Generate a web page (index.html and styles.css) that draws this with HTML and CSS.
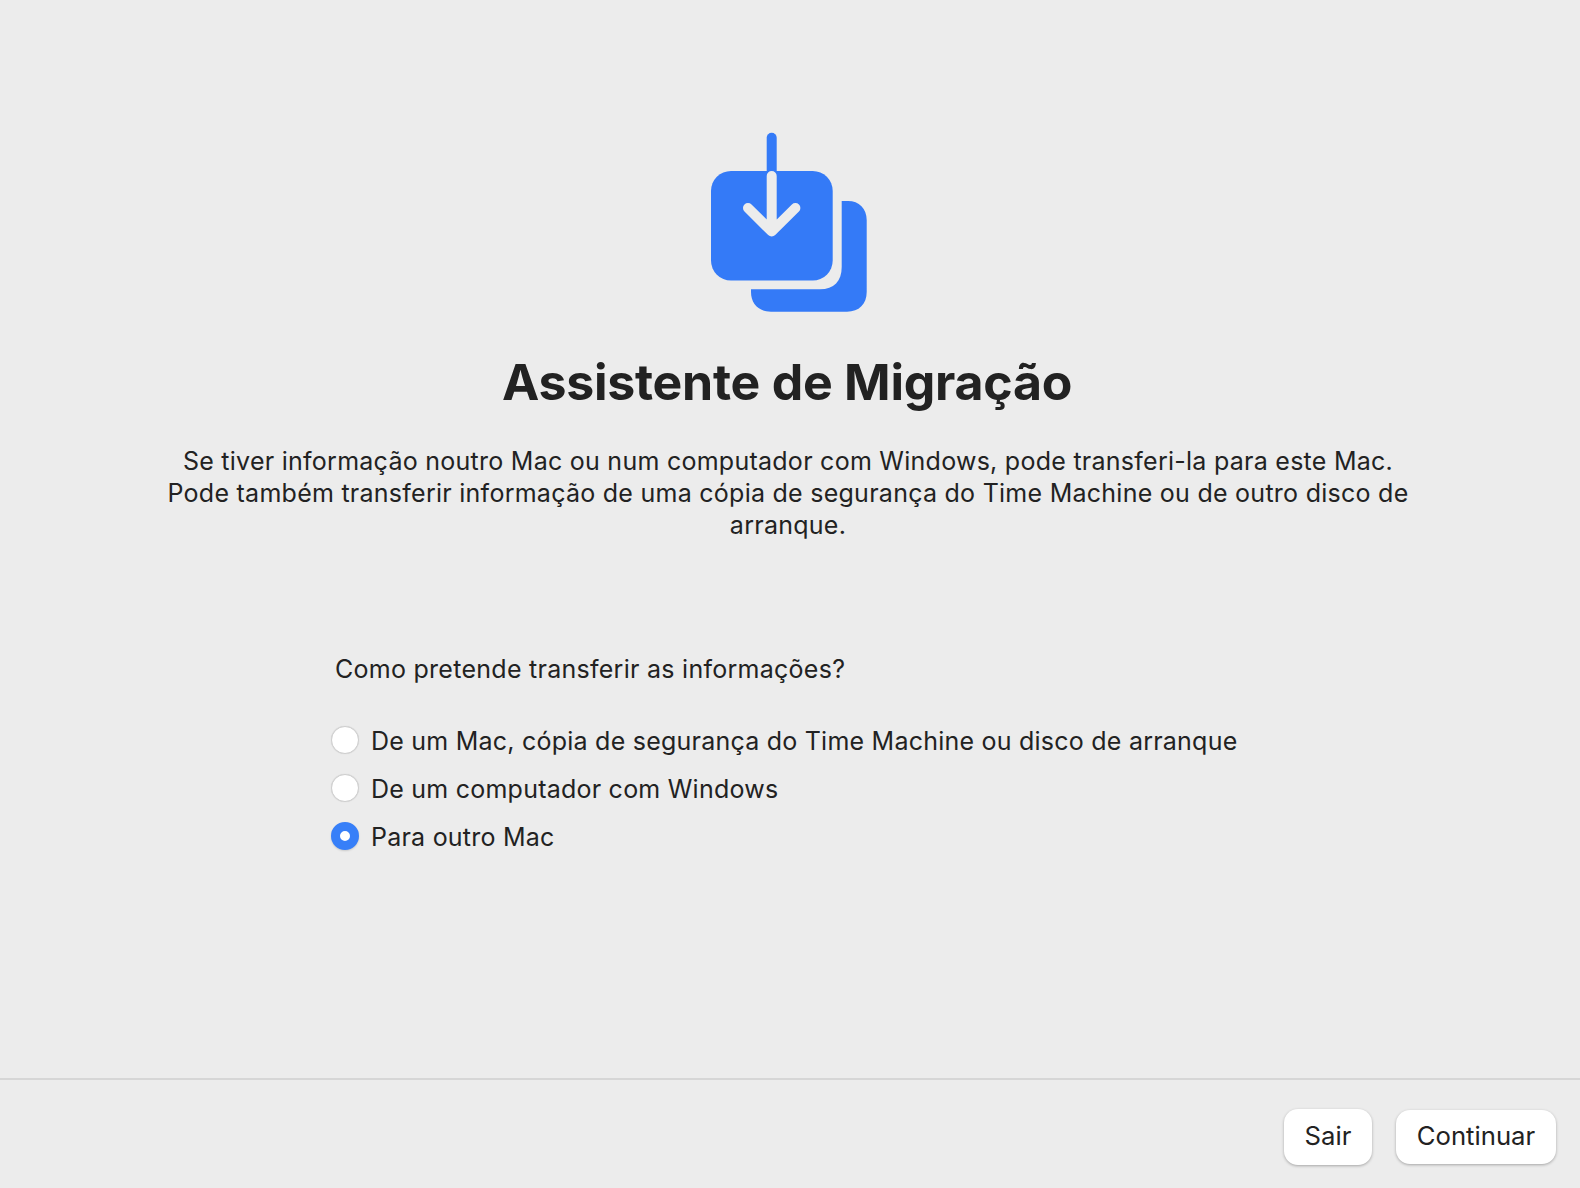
FILE: index.html
```html
<!DOCTYPE html>
<html lang="pt">
<head>
<meta charset="utf-8">
<title>Assistente de Migração</title>
<link rel="stylesheet" href="styles.css">
</head>
<body>
<main class="main">
  <svg class="logo" width="220" height="180" viewBox="678 132 220 180" aria-hidden="true">
    <path class="logo-fill" d="M841.7 201H848C859 201 866.7 208.5 866.7 220V292C866.7 304 859 311.7 847 311.7H771C759 311.7 751 304 751 292V289.3H820C834 289.3 841.7 281 841.7 267Z"/>
    <rect class="logo-fill" x="711" y="171" width="121.7" height="109.5" rx="20"/>
    <path class="logo-shaft" d="M771.7 137.7V176"/>
    <path class="logo-arrow" d="M771.7 176V228M748 208L771.7 231.5L795.4 208"/>
  </svg>
  <h1 class="title">Assistente de Migração</h1>
  <p class="intro">Se tiver informação noutro Mac ou num computador com Windows, pode transferi-la para este Mac. Pode também transferir informação de uma cópia de segurança do Time Machine ou de outro disco de arranque.</p>
  <section class="choices">
    <p class="question">Como pretende transferir as informações?</p>
    <ul class="options">
      <li class="option"><span class="radio"></span><span class="label">De um Mac, cópia de segurança do Time Machine ou disco de arranque</span></li>
      <li class="option"><span class="radio"></span><span class="label">De um computador com Windows</span></li>
      <li class="option"><span class="radio radio-on"></span><span class="label">Para outro Mac</span></li>
    </ul>
  </section>
</main>
<footer class="footer">
  <button class="btn btn-quit" type="button">Sair</button>
  <button class="btn btn-next" type="button">Continuar</button>
</footer>
</body>
</html>
```
FILE: styles.css
```css
* { box-sizing: border-box; }
html, body { margin: 0; height: 100%; }
body {
  width: 1580px;
  height: 1188px;
  overflow: hidden;
  display: flex;
  flex-direction: column;
  background: #ececec;
  color: #222;
  font-family: Inter, "Liberation Sans", sans-serif;
}
.main {
  height: 1078px;
  padding: 132px 4px 0 0;
  display: flex;
  flex-direction: column;
  align-items: center;
}
.logo { display: block; }
.logo-fill { fill: #347af7; }
.logo-shaft { fill: none; stroke: #347af7; stroke-width: 10; stroke-linecap: round; }
.logo-arrow { fill: none; stroke: #ececec; stroke-width: 10; stroke-linecap: round; stroke-linejoin: round; }
.title {
  margin: 41px 2px 0 0;
  font-size: 50px;
  line-height: 58px;
  font-weight: 700;
  letter-spacing: -0.25px;
  color: #222;
}
.intro {
  width: 1250px;
  margin: 34px 0 0;
  font-size: 25px;
  line-height: 32px;
  letter-spacing: 0.26px;
  text-align: center;
}
.choices { align-self: stretch; padding: 112px 0 0 331px; }
.question { margin: 0 0 0 4px; font-size: 25px; line-height: 32px; letter-spacing: 0.27px; }
.options { list-style: none; margin: 31px 0 0; padding: 0; }
.option {
  display: flex;
  align-items: center;
  gap: 12px;
  height: 48px;
  font-size: 25px;
  letter-spacing: 0.23px;
}
.label { padding-top: 2px; }
.radio {
  width: 28px;
  height: 28px;
  border-radius: 50%;
  background: #fff;
  border: 1px solid #cfcfcf;
  box-shadow: 0 0 1px rgba(0,0,0,0.15);
  flex: none;
}
.radio-on {
  border: 9px solid #377ff8;
  box-shadow: 0 1px 2px rgba(0,0,0,0.15);
}
.footer {
  flex: 1;
  border-top: 2px solid #d6d6d6;
  display: flex;
  justify-content: flex-end;
  align-items: center;
  gap: 24px;
  padding: 6px 24px 0 0;
}
.btn {
  border: 0;
  background: #fff;
  border-radius: 14px;
  padding: 0 0 3px;
  font: inherit;
  font-size: 25.7px;
  color: #222;
  box-shadow: 0 1px 3px rgba(0,0,0,0.3);
}
.btn-quit { width: 88px; height: 56px; }
.btn-next { width: 160px; height: 54px; }
```
